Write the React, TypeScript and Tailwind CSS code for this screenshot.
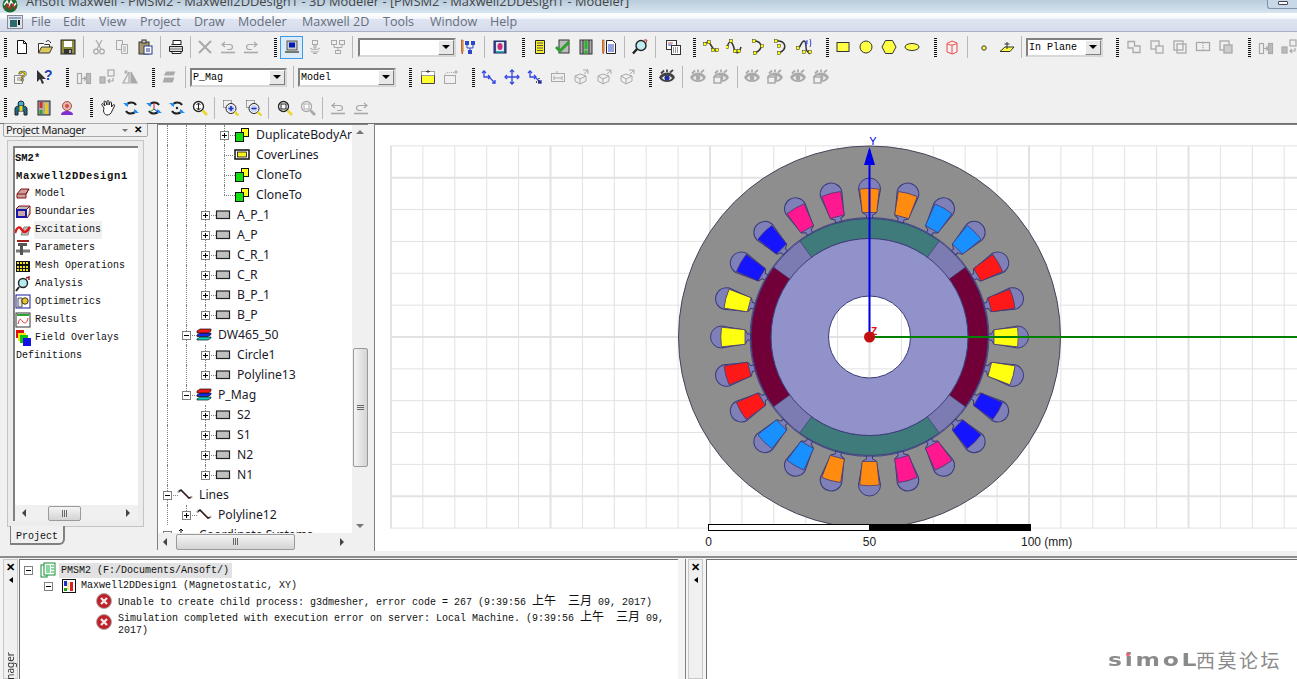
import React from "react";

const g = "#a9a9a9";
const k = "#222";
const Sv = ({ c, s = 16 }: { c: React.ReactNode; s?: number }) => (
  <svg width={s} height={s} viewBox="0 0 16 16" fill="none" className="shrink-0">{c}</svg>
);

const undo = (col: string) => (<g stroke={col} strokeWidth="1.2"><path d="M5 3 2 5.5 5 8" /><path d="M2.5 5.5h7c4 0 4 5 0 5H7" /><path d="M1 13.5h14" strokeWidth="1.6" /></g>);
const redo = (col: string) => (<g stroke={col} strokeWidth="1.2"><path d="M11 3l3 2.5L11 8" /><path d="M13.5 5.5h-7c-4 0-4 5 0 5H9" /><path d="M1 13.5h14" strokeWidth="1.6" /></g>);
const eye = (col: string, box = false) => (
  <g>
    <path d="M0 8.500C3 2.500 13 1.500 16 8.500 13 14.500 3 14.500 0 8.500z" fill={col} />
    <path d="M3 9C5 6 11 6 13 9 11 12 5 12 3 9z" fill="#f0f0f0" />
    <circle cx="8" cy="9" r="2.400" fill={col} />
    <path d="M2 4.500 5 1.500M8 3V.5M11 3.500 14 1" stroke={col} strokeWidth="1.800" />
    {box ? <path d="M1 8h7v6H1zM1 8l2-2h7l-2 2" fill="#f0f0f0" stroke={col} strokeWidth="1.500" /> : null}
  </g>
);
const rot = (mid: React.ReactNode) => (
  <g>
    <path d="M3 5.500C5 1.500 11 1.500 13 5M13 10.500C11 14.500 5 14.500 3 11" stroke={k} strokeWidth="2" />
    <path d="M0 3h5v4zM16 13h-5V9z" fill="#1890ff" />{mid}
  </g>
);
const mag = (inner: React.ReactNode, col = k, h = "#e8d830") => (
  <g>
    <circle cx="6.500" cy="6.500" r="5" fill="#fff" stroke={col} strokeWidth="1.300" />{inner}
    <path d="M10.500 10.500 15 15" stroke={h} strokeWidth="2.600" />
  </g>
);
const dashedMag = (sign: React.ReactNode) => (
  <g>
    <path d="M.5.5h8v6" stroke="#555" strokeDasharray="1 1" />
    <path d="M.5.5v7h3" stroke="#555" strokeDasharray="1 1" />
    <circle cx="8" cy="8.500" r="5" fill="#fff" stroke={k} />
    <circle cx="8" cy="8.500" r="3.600" fill="#c9d6f5" />{sign}
    <path d="M11.500 12 15.500 15.500" stroke="#e8d830" strokeWidth="2.400" />
  </g>
);
const curve = (d: string, pts: number[][]) => (
  <g>
    <path d={d} stroke="#333" strokeWidth="1.500" />
    {pts.map((p, i) => <rect key={i} x={p[0] - 1.5} y={p[1] - 1.5} width="3" height="3" fill="#ff0" stroke="#333" strokeWidth=".5" />)}
  </g>
);
const blueAxes = (v: number) => (
  <g stroke="#3044e0" strokeWidth="1.300">
    <path d={v === 1 ? "M8 1v14M1 8h14" : "M3 2v6h6M9 9l5 5"} />
    <path d={v === 1 ? "M6 3l2-2 2 2M6 13l2 2 2-2M3 6 1 8l2 2M13 6l2 2-2 2" : "M1 4l2-2 2 2M7 6l2 2-2 2M11 14h3v-3"} />
    {v === 2 ? <path d="M9 13h5M12 9v5" stroke="#222" strokeDasharray="1 1" /> : null}
  </g>
);
const grayBoxArrows = (
  <g stroke={g}><path d="M2 7 7 5l6 2v5l-6 3-5-3zM7 10v5M2 7l5 3 6-3" /><path d="M10 1h5M15 1v4M15 1l-4 4" /></g>
);

const icons: Record<string, React.ReactNode> = {
  new: <g stroke="#111"><path d="M3.500 1.500h6l3 3v10h-9z" fill="#fff" /><path d="M9.500 1.500v3h3" /></g>,
  open: <g stroke="#333"><path d="M1.500 14V4.500h5l1 1h5V8" fill="#fff" /><path d="M1.500 14l3-6h11l-3 6z" fill="#dcc85c" /><path d="M9 3c1-2 3-2 4 0l1 1" stroke="#222" /></g>,
  save: <g><rect x="1" y="1" width="14" height="14" fill="#8d8d3f" stroke="#222" /><rect x="4" y="2" width="8" height="6" fill="#fff" /><rect x="4" y="10" width="8" height="5" fill="#333" /><rect x="9" y="11" width="2" height="3" fill="#aaa" /></g>,
  cut: <g stroke={g} strokeWidth="1.200"><path d="M5 1l5 9M11 1 6 10" /><circle cx="5" cy="12.500" r="2.300" /><circle cx="11" cy="12.500" r="2.300" /></g>,
  copy: <g stroke={g}><path d="M2.500 1.500h6v9h-6z" /><path d="M7.500 5.500h6v9h-6z" fill="#f0f0f0" /><path d="M9 8h3M9 10h3M9 12h3" /></g>,
  paste: <g stroke="#333"><rect x="2" y="3" width="10" height="12" fill="#a89a68" /><rect x="5" y="1" width="4" height="3" fill="#ccc" /><rect x="7" y="7" width="8" height="8" fill="#fff" stroke="#223a90" /><path d="M9 10h4M9 12h4" stroke="#223a90" /></g>,
  print: <g stroke="#222"><path d="M5 1.500h8v4H5z" fill="#fff" /><path d="M1.500 7.500h13v5h-13z" fill="#ddd" /><path d="M3.500 5.500h10" /><path d="M4 12.500h9v2H4z" fill="#fff" /><path d="M2 10h12" stroke="#777" /></g>,
  del: <path d="M2 2l12 12M14 2 2 14" stroke={g} strokeWidth="2" />,
  undo: undo(g),
  redo: redo(g),
  comp: <g><rect x="3" y="2" width="10" height="9" fill="#ccc" stroke="#555" /><rect x="5" y="3.500" width="6" height="5" fill="#0018b8" /><path d="M1 13h14" stroke="#777" strokeWidth="2" /><path d="M3 13h2" stroke="#2ea02e" /></g>,
  wifi: <g stroke={g}><rect x="5.500" y="1.500" width="5" height="4" /><path d="M7 6h2v3H7zM3 9c2 2 8 2 10 0M4 12c2 1.500 6 1.500 8 0M6 14.500h4" /></g>,
  net: <g stroke={g}><rect x="1.500" y="1.500" width="5" height="4" /><rect x="9.500" y="1.500" width="5" height="4" /><rect x="5.500" y="11.500" width="5" height="3" /><path d="M4 6v2.500h8V6M8 8.500v3" /></g>,
  tree: <g><path d="M1.500 1l1.500 0v11l-.75 3L1.500 12z" fill="#e8c830" stroke="#b03020" strokeWidth=".7" /><g fill="#2c48c8"><rect x="5" y="2" width="4" height="4" /><rect x="11" y="2" width="4" height="4" /><rect x="8" y="11" width="4" height="4" /></g><path d="M7 6v3h6V6M10 9v2" stroke="#2c48c8" /></g>,
  q: <g><rect x="2" y="2" width="12" height="12" fill="#3a4a90" stroke="#1c2460" /><rect x="4" y="3" width="8" height="10" fill="#d8e8f0" /><ellipse cx="8" cy="7.500" rx="2.500" ry="3.500" fill="#d02878" /><path d="M4 13h8" stroke="#2090a0" strokeWidth="1.500" /></g>,
  ydoc: <g stroke="#222"><path d="M3.500 1.500h9v13h-9z" fill="#f8f030" /><path d="M5 4h6M5 6.500h6M5 9h6M5 11.500h6" stroke="#555" /></g>,
  check: <g><rect x="4" y="1" width="10" height="13" fill="#bbb" stroke="#333" /><path d="M1 8l4 4 9-9" stroke="#2d9f2d" strokeWidth="3" /></g>,
  excl: <g><rect x="2" y="1" width="12" height="14" fill="#aaa" stroke="#333" /><path d="M5 1v14M11 1v14" stroke="#333" /><rect x="6.500" y="2" width="3" height="8" fill="#22bb22" /><rect x="6.500" y="11.500" width="3" height="3" fill="#22bb22" /></g>,
  list: <g><path d="M1.500 1l1.500 0v11l-.75 3L1.500 12z" fill="#e8c830" stroke="#b03020" strokeWidth=".7" /><path d="M5.500 1.500h6l3 3v10h-9z" fill="#fff" stroke="#222" /><path d="M7 6h6M7 8h6M7 10h6M7 12h6" stroke="#2c48c8" /></g>,
  search: <g><circle cx="9" cy="6.500" r="5" fill="#bfeef2" stroke="#222" strokeWidth="1.400" /><path d="M5 10 1 14.500" stroke="#222" strokeWidth="2.400" /><path d="M12 1l3 0-1 3" stroke="#c03030" /></g>,
  table: <g stroke="#333"><rect x="1.500" y="1.500" width="10" height="9" fill="#fff" /><path d="M3 4h5" stroke="#c05050" /><path d="M3 6h4" stroke="#3050c0" /><rect x="6.500" y="6.500" width="9" height="9" fill="#fff" /><path d="M8 9h6M8 11h6M8 13h6" strokeDasharray="1 1" /></g>,
  polyline: curve("M2 4 6 3l5 8 3 1", [[2, 5], [6, 3], [10, 11], [14, 11]]),
  spline: curve("M1 9C3 0 6 2 8 9s5 6 7-1", [[1, 8], [5, 2], [9, 12], [13, 12]]),
  arc: curve("M4 2c8 0 10 8 1 12", [[4, 2], [12, 7], [5, 14]]),
  arc2: curve("M3 2c10-1 12 8 3 12", [[3, 2], [6, 7], [6, 14]]),
  func: <g>{curve("M1 10C5 9 5 2 8 2s1 8 3 10l3 3", [[2, 9], [8, 13], [14, 13]])}<path d="M10 7V2h2M10 4h2M14 0c1 2 1 6 0 8" stroke="#3044e0" /></g>,
  rect: <rect x="2" y="3.500" width="12" height="9" fill="#ffff44" stroke="#333" />,
  circle: <circle cx="8" cy="8" r="6" fill="#ffff44" stroke="#333" />,
  hex: <path d="M4.500 1.500h7L15 8l-3.500 6.500h-7L1 8z" fill="#ffff44" stroke="#333" />,
  ell: <ellipse cx="8" cy="8" rx="7" ry="3.500" fill="#ffff44" stroke="#333" />,
  cyl: <g stroke="#f04848"><path d="M3 4.500 8 2l5 2v9l-4.500 2L3 13z" /><path d="M3 4.500c2 2 6 2 10 0M8 6v9" /></g>,
  dot: <circle cx="8" cy="9" r="2.200" fill="#ffff44" stroke="#333" />,
  plane: <g stroke="#333"><path d="M1 12.500 6 8h9l-4 4.500z" fill="#ffff44" /><path d="M8 10V3M5.500 5h5" /></g>,
  g1: <path d="M2 2.500h6.500V7H14v6.500H7V9H2z" stroke={g} strokeWidth="1.300" />,
  g2: <g stroke={g} strokeWidth="1.300"><rect x="2" y="2" width="8" height="8" /><rect x="7" y="7" width="7" height="7" fill="#f0f0f0" /></g>,
  g3: <g stroke={g} strokeWidth="1.300"><rect x="2" y="2" width="9" height="9" /><rect x="5" y="5" width="9" height="9" /></g>,
  g4: <g stroke={g} strokeWidth="1.300"><rect x="1.500" y="3.500" width="13" height="8" /><path d="M8 4v7" strokeDasharray="1 1" /></g>,
  g5: <g stroke={g} strokeWidth="1.300"><rect x="2" y="2" width="9" height="9" /><rect x="6" y="6" width="8" height="8" fill="#ccc" /></g>,
  m1: <g stroke={g} strokeWidth="1.200"><rect x="1.500" y="4.500" width="4" height="10" /><rect x="10.500" y="4.500" width="4" height="10" fill="#bbb" /><path d="M6 9.500h4M8 7.500l2 2-2 2" /></g>,
  m2: <g stroke={g} strokeWidth="1.200"><rect x="1" y="8" width="5" height="6" fill="#bbb" /><rect x="9" y="1" width="6" height="6" /><path d="M14 9v3H9M11 10l-2 2 2 2" /></g>,
  m3: <g stroke={g} strokeWidth="1.200"><path d="M7 3v11H1zM2 3h4M4 1v4" /><path d="M9 3l6 11H9z" fill={g} /></g>,
  help: <g><path d="M1.500 6.500h8v8h-8z" fill="#f4f4f4" stroke="#888" /><path d="M4 9h4M4 11h4" stroke="#888" /><text x="5" y="12" fontFamily="Liberation Sans" fontWeight="700" fontSize="15" fill="#e8d020" stroke="#333" strokeWidth=".5">?</text></g>,
  whats: <g><path d="M1 1v12l3-3 2 5 2-1-2-4h4z" fill="#333" /><text x="8" y="11" fontFamily="Liberation Sans" fontWeight="700" fontSize="14" fill="#2040b0">?</text></g>,
  layers: <path d="M5 2h10l-2 5H2zM3 8h11l-2 6H1z" fill={g} stroke="#f0f0f0" />,
  ybox: <g stroke="#444"><path d="M1.500 6.500h13v8h-13z" fill="#ffff30" /><path d="M1.500 6.500v-4h13v4" fill="#fff" strokeDasharray="1 1" /><path d="M8 1v3M6 2.500h4" /></g>,
  gbox: <g stroke={g}><rect x="1.500" y="6.500" width="11" height="8" /><path d="M1.500 6.500l2-3h9" strokeDasharray="1 1" /><path d="M13 1v4M11 3h4" /></g>,
  ax1: blueAxes(0),
  ax2: blueAxes(1),
  ax3: blueAxes(2),
  b1: <g stroke={g}><rect x="1.500" y="4.500" width="13" height="8" /><path d="M4 9h8M4 7v4M12 7v4M7 2v3" /></g>,
  b2: grayBoxArrows,
  eye: <g>{eye("#444")}<circle cx="8" cy="9" r="2.500" fill="#2030a0" /></g>,
  ey1: eye("#aaa"),
  ey2: eye("#aaa", true),
  wiz: <g><circle cx="8" cy="4" r="3" fill="#40b0d0" stroke="#222" /><path d="M2 15V9c0-3 3-3 6-3s6 0 6 3v6h-3v-4H5v4z" fill="#1c6a88" stroke="#222" /><rect x="6.500" y="6" width="3" height="5" fill="#e8d820" /></g>,
  bars: <g><rect x="2" y="1" width="12" height="14" fill="#aaa" stroke="#222" /><rect x="3.500" y="2" width="3" height="6" fill="#d03030" /><rect x="3.500" y="10" width="3" height="4" fill="#30a030" /><rect x="9" y="3" width="3" height="11" fill="#e8c820" /></g>,
  tgt: <g><circle cx="8" cy="6" r="4.500" fill="#e8b8a8" stroke="#a05050" /><circle cx="8" cy="6" r="2" fill="#d05050" /><path d="M2 15c0-3 3-4 6-4s6 1 6 4z" fill="#8030d0" /></g>,
  hand: <g stroke="#222" fill="#fff"><path d="M4 8 2 5c-1-1 .5-2 1.500-1L5 6 4 2c0-1.500 1.500-1 2 0l1 3V1.500c0-1.500 2-1 2 0V5l1-2.500c.5-1 2-.5 1.500.5L11.500 7l1.500-2c1-1 2 0 1.500 1l-2.500 5c-1 3-3 4-5 4S4 13 3.500 11z" /></g>,
  r1: rot(null),
  r2: rot(<g><path d="M8 3v6" stroke="#d02020" /><path d="M8 9l-4 3" stroke="#20a020" /><path d="M8 9l4 3" stroke="#2030d0" /></g>),
  r3: rot(<circle cx="8" cy="8" r="1.200" fill="#222" />),
  zfit: mag(<path d="M6.500 3v7M4.500 5l2-2 2 2M4.500 8l2 2 2-2" stroke="#222" />),
  zin: dashedMag(<path d="M5.500 8.500h5M8 6v5" stroke="#2030c0" strokeWidth="1.600" />),
  zout: dashedMag(<path d="M5.500 8.500h5" stroke="#2030c0" strokeWidth="1.600" />),
  z1: mag(<rect x="4" y="4" width="5" height="5" stroke={k} />),
  z2: mag(<rect x="4" y="4" width="5" height="5" stroke={g} />, g, g),
};

const I = ({ n, className = "" }: { n: string; className?: string }) => (
  <div className={`flex h-[23px] w-[23px] shrink-0 items-center justify-center ${className}`}>
    <Sv c={icons[n]} />
  </div>
);
const Grip = ({ className = "" }: { className?: string }) => (
  <div className={`h-[19px] w-[3px] shrink-0 bg-[repeating-linear-gradient(#111_0_1px,transparent_1px_2px)] ${className}`} />
);
const Sep = ({ className = "" }: { className?: string }) => (
  <div className={`h-[22px] w-px shrink-0 bg-[#b8b8b8] ${className}`} />
);
const Combo = ({ text, className = "" }: { text: string; className?: string }) => (
  <div className={`flex h-[19px] shrink-0 border-2 border-b-[#d8d8d8] border-l-[#808080] border-r-[#d8d8d8] border-t-[#808080] bg-white ${className}`}>
    <span className="flex-1 overflow-hidden pl-[1px] font-['Liberation_Mono',monospace] text-[10px] leading-[15px] text-black">{text}</span>
    <div className="flex w-[16px] shrink-0 items-center justify-center border border-b-[#808080] border-l-white border-r-[#808080] border-t-white bg-[#e8e8e8]">
      <div className="h-0 w-0 border-x-[4px] border-t-[4px] border-x-transparent border-t-black" />
    </div>
  </div>
);
const Row = ({ h, children }: { h: string; children: React.ReactNode }) => (
  <div className={`flex items-center overflow-hidden pl-[4px] ${h}`}>{children}</div>
);

const Box = ({ t }: { t: "+" | "-" }) => (
  <div className="flex h-[9px] w-[9px] items-center justify-center border border-[#808080] bg-white">
    <div className="relative h-[5px] w-[5px]">
      <div className="absolute left-0 top-[2px] h-px w-[5px] bg-black" />
      {t === "+" ? <div className="absolute left-[2px] top-0 h-[5px] w-px bg-black" /> : null}
    </div>
  </div>
);

const treeIcons: Record<string, React.ReactNode> = {
  dup: <g stroke="#111"><rect x="7.500" y="1.500" width="7" height="8" fill="#ffff20" /><rect x="1.500" y="5.500" width="8" height="9" fill="#10e010" /></g>,
  cov: <g stroke="#111"><rect x="1" y="3" width="14" height="9" fill="#fff" strokeWidth="1.500" /><rect x="3.500" y="5" width="9" height="5" fill="#f8f020" strokeWidth=".8" /></g>,
  gray: <rect x="1.500" y="4" width="13" height="7.500" fill="#c0c0c0" stroke="#222" strokeWidth="1.200" />,
  mat: <g stroke="#111" strokeWidth=".7"><path d="M1 13h11l3-2v-1H4l-3 2z" fill="#10d0c0" /><path d="M1 9.500h11l3-2V6H4L1 8z" fill="#1828e0" /><path d="M1 6h11l3-2V2H4L1 4z" fill="#f01818" /></g>,
  line: <g><path d="M1 5l3-2 8 8 3-1" stroke="#222" strokeWidth="1.600" /><path d="M4 4l8 8" stroke="#a04040" strokeWidth=".8" /><circle cx="1.500" cy="5" r="1" fill="#aaa" /><circle cx="14.500" cy="10" r="1" fill="#aaa" /></g>,
  coord: <path d="M4 16V2M2 4l2-2 2 2" stroke="#111" />,
};

type TR = { d: number; gs: number[]; end?: boolean; cont?: boolean; box?: "+" | "-"; ic: string; t: string };
const treeRows: TR[] = [
  { d: 3, gs: [0, 1, 2], cont: true, box: "+", ic: "dup", t: "DuplicateBodyAr" },
  { d: 3, gs: [0, 1, 2], cont: true, ic: "cov", t: "CoverLines" },
  { d: 3, gs: [0, 1, 2], cont: true, ic: "dup", t: "CloneTo" },
  { d: 3, gs: [0, 1, 2], end: true, ic: "dup", t: "CloneTo" },
  { d: 2, gs: [0, 1], cont: true, box: "+", ic: "gray", t: "A_P_1" },
  { d: 2, gs: [0, 1], cont: true, box: "+", ic: "gray", t: "A_P" },
  { d: 2, gs: [0, 1], cont: true, box: "+", ic: "gray", t: "C_R_1" },
  { d: 2, gs: [0, 1], cont: true, box: "+", ic: "gray", t: "C_R" },
  { d: 2, gs: [0, 1], cont: true, box: "+", ic: "gray", t: "B_P_1" },
  { d: 2, gs: [0, 1], end: true, box: "+", ic: "gray", t: "B_P" },
  { d: 1, gs: [0], cont: true, box: "-", ic: "mat", t: "DW465_50" },
  { d: 2, gs: [0, 1], cont: true, box: "+", ic: "gray", t: "Circle1" },
  { d: 2, gs: [0, 1], end: true, box: "+", ic: "gray", t: "Polyline13" },
  { d: 1, gs: [0], end: true, box: "-", ic: "mat", t: "P_Mag" },
  { d: 2, gs: [0], cont: true, box: "+", ic: "gray", t: "S2" },
  { d: 2, gs: [0], cont: true, box: "+", ic: "gray", t: "S1" },
  { d: 2, gs: [0], cont: true, box: "+", ic: "gray", t: "N2" },
  { d: 2, gs: [0], end: true, box: "+", ic: "gray", t: "N1" },
  { d: 0, gs: [], cont: true, box: "-", ic: "line", t: "Lines" },
  { d: 1, gs: [0], end: true, box: "+", ic: "line", t: "Polyline12" },
  { d: 0, gs: [], box: "-", ic: "coord", t: "Coordinate Systems" },
];

const TreeRow = ({ r }: { r: TR }) => (
  <div className="flex h-[20px] shrink-0 items-center">
    {[0, 1, 2, 3].slice(0, r.d).map((i) => (
      <div key={i} className="flex h-full w-[19px] shrink-0 justify-center">
        {r.gs.includes(i) ? <div className="h-full w-0 border-l border-dotted border-[#808080]" /> : null}
      </div>
    ))}
    <div className="relative flex h-full w-[19px] shrink-0 items-center justify-center">
      {r.cont ? <div className="absolute bottom-0 left-[9px] top-0 border-l border-dotted border-[#808080]" /> : null}
      {r.end ? <div className="absolute left-[9px] top-0 h-[10px] border-l border-dotted border-[#808080]" /> : null}
      <div className="absolute left-[9px] top-[10px] w-[11px] border-t border-dotted border-[#808080]" />
      {r.box ? <div className="relative"><Box t={r.box} /></div> : null}
    </div>
    <Sv c={treeIcons[r.ic]} />
    <span className="ml-[6px] whitespace-nowrap font-['Noto_Sans',sans-serif] text-[12.200px] leading-[20px] text-[#1a1a2a]">{r.t}</span>
  </div>
);

const pmIcons: Record<string, React.ReactNode> = {
  model: <g stroke="#8a1010"><path d="M2 8l4-5h8l-3 5v4H2z" fill="#c8a0a0" /><path d="M2 8h9l3-5" /></g>,
  bound: <g><path d="M1 5h11v9H1z" fill="#1818a8" /><path d="M3 7h7v5H3z" fill="#c8a8a8" /><path d="M1 5l3-3h11l-3 3M12 14l3-4V2" stroke="#8a1010" fill="#bbb" /></g>,
  exc: <g><path d="M6 13l3-8h6l-2 8z" fill="#bbb" stroke="#888" /><path d="M0 11c3-8 5-6 7-3s4 3 8-3" stroke="#e01818" strokeWidth="2.500" /></g>,
  param: <g><path d="M1 11h14" stroke="#777" strokeWidth="3" /><path d="M3 3h9v3H8v9H5V6H3z" fill="#555" /><path d="M2 1h12" stroke="#a02020" strokeWidth="2" /></g>,
  mesh: <g><rect x="1" y="3" width="14" height="11" fill="#111" /><g fill="#f0e020">{[4, 8, 11].map((y) => [2, 5, 8, 11].map((x) => <rect key={`${x}-${y}`} x={x} y={y} width="2" height="2" />))}</g></g>,
  ana: <g><circle cx="8" cy="7" r="4.500" fill="#b8e8f0" stroke="#222" strokeWidth="1.400" /><path d="M4 11 1 15" stroke="#222" strokeWidth="2" /><path d="M11 2l3-1v3" stroke="#902020" strokeWidth="1.500" /></g>,
  opt: <g><rect x="1" y="1" width="14" height="13" fill="#fff" stroke="#1818a8" /><path d="M3 4h4v9H3z" fill="#e8e8e8" stroke="#555" /><circle cx="10" cy="7" r="3.200" fill="#e8c820" stroke="#333" /></g>,
  res: <g><rect x="1" y="1" width="14" height="14" fill="#fff" stroke="#333" /><path d="M2 2h12v2H2z" fill="#30a030" /><path d="M3 12c2-8 3-4 5-2s4 1 5-4" stroke="#e03030" /></g>,
  field: <g><rect x="1" y="0" width="8" height="8" fill="#e01010" /><rect x="3" y="3" width="8" height="8" fill="#e8e810" /><rect x="5" y="5" width="8" height="8" fill="#10c010" /><rect x="8" y="8" width="8" height="8" fill="#1010e8" /></g>,
};
const pmRows = [
  ["model", "Model"], ["bound", "Boundaries"], ["exc", "Excitations"], ["param", "Parameters"], ["mesh", "Mesh Operations"],
  ["ana", "Analysis"], ["opt", "Optimetrics"], ["res", "Results"], ["field", "Field Overlays"],
];

const Arrow = ({ d }: { d: "l" | "r" | "u" | "d" }) => {
  const c = d === "l" ? "border-y-[4px] border-r-[4px] border-y-transparent border-r-[#444]"
    : d === "r" ? "border-y-[4px] border-l-[4px] border-y-transparent border-l-[#444]"
    : d === "u" ? "border-x-[4px] border-b-[4px] border-x-transparent border-b-[#777]"
    : "border-x-[4px] border-t-[4px] border-x-transparent border-t-[#777]";
  return <div className={`h-0 w-0 shrink-0 ${c}`} />;
};
const Ticks = ({ v }: { v?: boolean }) => (
  <div className={`flex ${v ? "flex-col gap-px" : "gap-px"}`}>
    {[0, 1, 2].map((i) => <div key={i} className={v ? "h-px w-[7px] bg-[#666]" : "h-[7px] w-px bg-[#666]"} />)}
  </div>
);

const CX = 869.5;
const CY = 337;
const pol = (r: number, deg: number) => {
  const a = (deg * Math.PI) / 180;
  return [CX + r * Math.cos(a), CY - r * Math.sin(a)].map((v) => v.toFixed(2)).join(" ");
};
const sector = (r1: number, r2: number, a1: number, a2: number) =>
  `M${pol(r2, a1)} A${r2} ${r2} 0 0 0 ${pol(r2, a2)} L${pol(r1, a2)} A${r1} ${r1} 0 0 1 ${pol(r1, a1)} Z`;
const slotColors = ["#ffff10", "#ff1818", "#ff1818", "#1890ff", "#1890ff", "#ff8c10", "#ff8c10", "#ff1890", "#ff1890", "#1414ff", "#1414ff", "#ffff10"];

const Motor = () => {
  const vs = Array.from({ length: 29 }, (_, i) => i - 15);
  const hs = Array.from({ length: 13 }, (_, i) => i - 6);
  return (
    <svg className="block h-full w-full" viewBox="375 125 922 426" preserveAspectRatio="xMinYMin slice">
      <defs>
        <mask id="hole" maskUnits="userSpaceOnUse" x="375" y="125" width="922" height="426">
          <rect x="375" y="125" width="922" height="426" fill="#fff" />
          <circle cx={CX} cy={CY} r="41" fill="#000" />
        </mask>
      </defs>
      {vs.map((i) => (
        <line key={i} x1={CX + i * 31.9} x2={CX + i * 31.9} y1="146" y2="528" stroke="#e2e2e2" strokeWidth={i % 5 === 0 ? 2 : 1} />
      ))}
      {hs.map((i) => (
        <line key={i} x1="390" x2="1297" y1={CY + i * 31.85} y2={CY + i * 31.85} stroke="#e2e2e2" strokeWidth={Math.abs(i) === 5 || i === 0 ? 2 : 1} />
      ))}
      <g mask="url(#hole)">
        <circle cx={CX} cy={CY} r="191" fill="#8e8e8e" stroke="#44445a" />
        <circle cx={CX} cy={CY} r="119.500" fill="#8080b8" stroke="#3b3b7a" strokeWidth=".8" />
        {Array.from({ length: 24 }, (_, i) => {
          const a = i * 15;
          return (
            <g key={a} transform={`rotate(${90 - a} ${CX} ${CY}) translate(${CX} ${CY})`}>
              <path d="M-3 -119L-3 -122L-6.800 -124L-11 -148A11 11 0 0 1 11 -148L6.800 -124L3 -122L3 -119Z" fill="#8080b8" stroke="#3b3b7a" />
              <path d="M-7.300 -124.500L-9.800 -148Q0 -149.500 9.800 -148L7.300 -124.500Z" fill={slotColors[i % 12]} stroke="#4a3a70" strokeWidth=".8" />
            </g>
          );
        })}
        <circle cx={CX} cy={CY} r="118.500" fill="#7c7cb2" stroke="#3b3b7a" strokeWidth=".8" />
        <path d={sector(98.500, 118.500, -36, 36)} fill="#720038" stroke="#3b3b7a" strokeWidth=".7" />
        <path d={sector(98.500, 118.500, 144, 216)} fill="#720038" stroke="#3b3b7a" strokeWidth=".7" />
        <path d={sector(98.500, 118.500, 54, 126)} fill="#3f7b7b" stroke="#3b3b7a" strokeWidth=".7" />
        <path d={sector(98.500, 118.500, 234, 306)} fill="#3f7b7b" stroke="#3b3b7a" strokeWidth=".7" />
        <circle cx={CX} cy={CY} r="98.500" fill="#9292ca" stroke="#3b3b7a" />
      </g>
      <circle cx={CX} cy={CY} r="41" fill="none" stroke="#3b3b7a" />
      <line x1={CX} x2="1297" y1={CY} y2={CY} stroke="#008000" strokeWidth="2" />
      <line x1={CX} x2={CX} y1="150" y2={CY} stroke="#0000e8" strokeWidth="2" />
      <path d={`M${CX} 147 L${CX + 5.5} 165 L${CX - 5.500} 165 Z`} fill="#0000e8" />
      <text x="873" y="145" textAnchor="middle" fontFamily="Liberation Sans" fontSize="11" fill="#0000e8">Y</text>
      <text x="871" y="335" fontFamily="Liberation Sans" fontWeight="700" fontSize="10" fill="#e01010">Z</text>
      <circle cx={CX} cy={CY} r="5.500" fill="#c01010" />
      <rect x="708.500" y="524.500" width="161" height="6" fill="#fff" stroke="#000" />
      <rect x="869" y="524" width="162" height="7" fill="#000" />
      <g fontFamily="Liberation Sans" fontSize="12" fill="#222">
        <text x="708.500" y="546" textAnchor="middle">0</text>
        <text x="869.500" y="546" textAnchor="middle">50</text>
        <text x="1021" y="546">100 (mm)</text>
      </g>
    </svg>
  );
};

const Err = () => (
  <svg width="16" height="16" viewBox="0 0 16 16" className="shrink-0">
    <circle cx="8" cy="8" r="7.500" fill="#c02028" stroke="#aaa" />
    <path d="M5 5l6 6M11 5l-6 6" stroke="#f0e8e8" strokeWidth="2.400" />
  </svg>
);

const mono = "font-['Liberation_Mono','Noto_Sans_CJK_SC',monospace] text-[10px] text-[#111]";

const SideStrip = ({ label, className = "" }: { label?: string; className?: string }) => (
  <div className={`flex shrink-0 flex-col items-center border border-[#c8c8c8] bg-[#f0f0f0] pt-[1px] ${className}`}>
    <span className="font-['Liberation_Sans',sans-serif] text-[11px] font-bold leading-[12px] text-black">✕</span>
    <div className="mt-[4px] h-0 w-0 border-y-[3px] border-r-[4px] border-y-transparent border-r-black" />
    {label ? (
      <span className="mb-[-2px] mt-auto rotate-180 font-['Noto_Sans',sans-serif] text-[10px] leading-[13px] text-[#333] [writing-mode:vertical-rl]">{label}</span>
    ) : null}
  </div>
);

const menus: [string, string][] = [
  ["File", "w-[32px]"], ["Edit", "w-[36px]"], ["View", "w-[41px]"], ["Project", "w-[54px]"], ["Draw", "w-[44px]"],
  ["Modeler", "w-[64px]"], ["Maxwell 2D", "w-[81px]"], ["Tools", "w-[47px]"], ["Window", "w-[60px]"], ["Help", "w-[40px]"],
];

export default function App() {
  return (
    <div className="relative flex h-[679px] w-[1297px] flex-col overflow-hidden bg-[#f0f0f0]">
      {/* title bar */}
      <div className="flex h-[13px] shrink-0 items-start bg-gradient-to-b from-[#b9ccdc] to-[#d8e5f1]">
        <svg width="16" height="13" viewBox="0 0 16 13" className="ml-[2px] shrink-0">
          <circle cx="8" cy="5" r="7.500" fill="#1d6a30" />
          <path d="M2 5 5 1l2 5 2-5 3 5 2-3" stroke="#fff" strokeWidth="1.400" fill="none" />
          <path d="M3 9 6 4l2 5 3-5 2 5" stroke="#d02020" strokeWidth="1.200" fill="none" />
        </svg>
        <span className="ml-[8px] mt-[-8px] whitespace-nowrap font-['Open_Sans',sans-serif] text-[12.870px] leading-[18px] text-[#444]">
          Ansoft Maxwell - PMSM2 - Maxwell2DDesign1 - 3D Modeler - [PMSM2 - Maxwell2DDesign1 - Modeler]
        </span>
        <div className="ml-auto flex h-[9px] w-[30px] items-start justify-center rounded-bl-[3px] border-b border-l border-[#7f94a8] bg-[#c8d8e6]">
          <div className="mt-px h-[4px] w-[10px] rounded-[1px] border border-[#445] bg-white" />
        </div>
      </div>
      {/* menu bar */}
      <div className="flex h-[19px] shrink-0 items-center border-b border-[#a8b2c6] bg-[linear-gradient(#fff_0,#f4f6fb_30%,#dfe4f2_36%,#d6dcec_100%)]">
        <svg width="16" height="14" viewBox="0 0 16 14" className="ml-[7px] mr-[8px] shrink-0">
          <rect x=".5" y=".5" width="15" height="13" fill="#dfe4ea" stroke="#889" />
          <rect x="2" y="2" width="12" height="2" fill="#8ca6c0" />
          <rect x="3" y="5" width="7" height="7" fill="#2c6a70" />
          <rect x="11" y="5" width="2" height="5" fill="#111" />
        </svg>
        {menus.map(([m, w]) => (
          <span key={m} className={`${w} shrink-0 whitespace-nowrap font-['Open_Sans',sans-serif] text-[12.500px] leading-[18px] text-[#66707c]`}>{m}</span>
        ))}
      </div>
      {/* toolbars */}
      <div className="flex h-[91px] shrink-0 flex-col">
        <Row h="h-[30px]">
          <Grip /><I n="new" className="ml-[3px]" /><I n="open" /><I n="save" /><Sep className="ml-[4px]" />
          <I n="cut" className="ml-[3px]" /><I n="copy" /><I n="paste" /><Sep className="ml-[4px]" />
          <I n="print" className="ml-[3px]" /><Sep className="ml-[3px]" />
          <I n="del" className="ml-[2px]" /><I n="undo" /><I n="redo" />
          <Grip className="ml-[12px]" />
          <I n="comp" className="ml-[3px] border border-[#3c9ae8] bg-[#dcebf8]" /><I n="wifi" /><I n="net" /><Sep className="ml-[3px]" />
          <Combo text="" className="ml-[5px] w-[98px]" /><I n="tree" /><Sep className="ml-[5px]" />
          <I n="q" className="ml-[3px]" /><Grip className="ml-[11px]" />
          <I n="ydoc" className="ml-[3px]" /><I n="check" /><I n="excl" /><I n="list" /><Sep className="ml-[4px]" />
          <I n="search" className="ml-[3px]" /><Sep className="ml-[4px]" /><I n="table" className="ml-[5px]" />
          <Grip className="ml-[9px]" />
          <I n="polyline" className="ml-[3px]" /><I n="spline" /><I n="arc" className="ml-px" /><I n="arc2" /><I n="func" />
          <Grip className="ml-[11px]" />
          <I n="rect" className="ml-[2px]" /><I n="circle" /><I n="hex" /><I n="ell" />
          <Grip className="ml-[11px]" /><I n="cyl" className="ml-[3px]" /><Sep className="ml-[4px]" />
          <I n="dot" className="ml-[4px]" /><I n="plane" /><Sep className="ml-[3px]" />
          <Combo text="In Plane" className="ml-[4px] w-[77px]" />
          <Grip className="ml-[13px]" />
          <I n="g1" className="ml-[3px]" /><I n="g2" /><I n="g3" /><I n="g4" /><I n="g5" />
          <Grip className="ml-[11px]" /><I n="m1" className="ml-[3px]" /><I n="m2" />
        </Row>
        <Row h="h-[30px]">
          <Grip /><I n="help" className="ml-[2px]" /><I n="whats" /><Grip className="ml-[11px]" />
          <I n="m1" className="ml-[3px]" /><I n="m2" /><I n="m3" /><Grip className="ml-[11px]" />
          <I n="layers" className="ml-[2px]" /><Sep className="ml-[5px]" />
          <Combo text="P_Mag" className="ml-[4px] w-[97px]" /><Sep className="ml-[6px]" />
          <Combo text="Model" className="ml-[4px] w-[98px]" /><Grip className="ml-[13px]" />
          <I n="ybox" className="ml-[4px]" /><I n="gbox" /><Grip className="ml-[10px]" />
          <I n="ax1" className="ml-[2px]" /><I n="ax2" /><I n="ax3" /><I n="b1" /><I n="b2" /><I n="b2" /><I n="b2" />
          <Grip className="ml-[11px]" /><I n="eye" className="ml-[3px]" /><Sep className="ml-[4px]" />
          <I n="ey1" className="ml-[3px]" /><I n="ey2" /><Sep className="ml-[5px]" />
          <I n="ey1" className="ml-[2px]" /><I n="ey2" /><I n="ey1" /><I n="ey2" />
        </Row>
        <Row h="h-[31px]">
          <Grip /><I n="wiz" className="ml-[2px]" /><I n="bars" /><I n="tgt" /><Grip className="ml-[12px]" />
          <I n="hand" className="ml-[3px]" /><I n="r1" /><I n="r2" /><I n="r3" /><I n="zfit" /><Sep className="ml-[3px]" />
          <I n="zin" className="ml-[4px]" /><I n="zout" /><Sep className="ml-[3px]" />
          <I n="z1" className="ml-[4px]" /><I n="z2" /><Sep className="ml-[3px]" />
          <I n="undo" className="ml-[3px]" /><I n="redo" />
        </Row>
      </div>
      <div className="h-px shrink-0 bg-[#707070]" />
      {/* main */}
      <div className="flex h-[432px] shrink-0">
        {/* project manager */}
        <div className="flex w-[157px] shrink-0 flex-col">
          <div className="ml-[3px] mt-[-1px] flex h-[14px] w-[145px] shrink-0 items-center rounded-[2px] border border-[#a8a8a8] pl-[2px] pr-[5px]">
            <span className="font-['Noto_Sans',sans-serif] text-[11px] leading-[12px] tracking-[-0.4px] text-[#222]">Project Manager</span>
            <div className="ml-auto h-0 w-0 border-x-[3px] border-t-[3px] border-x-transparent border-t-[#777]" />
            <span className="ml-[6px] font-['Liberation_Sans',sans-serif] text-[10px] font-bold leading-[12px] text-black">✕</span>
          </div>
          <div className="ml-[8px] mt-[4px] flex h-[385px] w-[135px] flex-col border-[5px] border-[#ececec] bg-white shadow-[0_0_0_1px_#c4c4c4]">
            <div className="flex min-h-0 flex-1 flex-col border-l-2 border-t-2 border-[#808080]">
              <div className="flex-1 overflow-hidden bg-white">
                <div className="mt-[1px] h-[18px] font-['Liberation_Mono',monospace] text-[10.500px] font-bold leading-[18px] text-[#111]">SM2*</div>
                <div className="h-[18px] pl-[1px] font-['Liberation_Mono',monospace] text-[10.500px] font-bold leading-[18px] tracking-[.7px] text-[#111]">Maxwell2DDesign1</div>
                {pmRows.map(([ic, t]) => (
                  <div key={t} className="flex h-[18px] items-center">
                    <Sv c={pmIcons[ic]} />
                    <span className={`ml-[3px] whitespace-nowrap px-px ${t === "Excitations" ? "bg-[#f0f0f0]" : ""} ${mono} leading-[18px]`}>{t}</span>
                  </div>
                ))}
                <div className={`h-[18px] pl-[1px] ${mono} leading-[18px]`}>Definitions</div>
              </div>
              <div className="flex h-[16px] shrink-0 items-center bg-[#f0f0f0] pl-[7px] pr-[8px]">
                <Arrow d="l" />
                <div className="ml-[22px] flex h-[15px] w-[33px] items-center justify-center rounded-[2px] border border-[#9a9a9a] bg-gradient-to-b from-[#f4f4f4] to-[#d4d4d4]"><Ticks /></div>
                <div className="ml-auto"><Arrow d="r" /></div>
              </div>
            </div>
          </div>
          <div className="ml-[10px] flex h-[19px] w-[55px] items-center rounded-br-[6px] border-b-2 border-l border-r-2 border-[#808080] bg-[#f0f0f0] pl-[5px] pt-[4px]">
            <span className={`${mono} leading-[14px]`}>Project</span>
          </div>
        </div>
        {/* tree */}
        <div className="flex h-[426px] w-[211px] shrink-0 flex-col border-l border-t border-[#808080] bg-white">
          <div className="flex min-h-0 flex-1">
            <div className="flex min-w-0 flex-1 flex-col overflow-hidden">
              {treeRows.map((r, i) => <TreeRow key={i} r={r} />)}
            </div>
            <div className="flex w-[16px] shrink-0 flex-col items-center bg-[#f0f0f0] py-[5px]">
              <Arrow d="u" />
              <div className="mt-[214px] flex h-[119px] w-[15px] items-center justify-center rounded-[2px] border border-[#9a9a9a] bg-gradient-to-r from-[#f4f4f4] to-[#d4d4d4]"><Ticks v /></div>
              <div className="mt-auto"><Arrow d="d" /></div>
            </div>
          </div>
          <div className="flex h-[17px] shrink-0 items-center bg-[#f0f0f0] pl-[5px] pr-[4px]">
            <Arrow d="l" />
            <div className="ml-[9px] flex h-[16px] w-[119px] items-center justify-center rounded-[2px] border border-[#9a9a9a] bg-gradient-to-b from-[#f4f4f4] to-[#d4d4d4]"><Ticks /></div>
            <div className="ml-auto mr-[20px]"><Arrow d="r" /></div>
          </div>
        </div>
        {/* canvas */}
        <div className="ml-[6px] h-[427px] min-w-0 flex-1 border-l border-t border-[#808080] bg-white">
          <Motor />
        </div>
      </div>
      <div className="h-[2px] shrink-0 bg-[#8c8c8c]" />
      {/* bottom */}
      <div className="flex min-h-0 flex-1 bg-[#f4f4f4] pl-[3px] pt-[1px]">
        <SideStrip label="nager" className="h-full w-[15px]" />
        <div className="ml-px flex w-[659px] shrink-0 flex-col border-l border-t border-[#707070] bg-white pl-[2px]">
          <div className="flex h-[18px] items-center pl-[1px] pt-[2px]">
            <div className="flex h-[16px] w-[17px] shrink-0 items-center justify-start pl-[1px]"><Box t="-" /></div>
            <svg width="16" height="16" viewBox="0 0 16 16" className="shrink-0">
              <g stroke="#109030" fill="#fff"><rect x="1" y="3" width="6" height="12" /><rect x="4" y="1" width="11" height="12" /></g>
              <path d="M6 4h4M6 6h4M6 8h4M6 10h4M11 4h3M11 7h3M11 10h3" stroke="#10b040" />
            </svg>
            <span className={`ml-[3px] bg-[#e2e2e2] pl-[2px] pr-[3px] ${mono} leading-[15px]`}>PMSM2 (F:/Documents/Ansoft/)</span>
          </div>
          <div className="flex h-[16px] items-center pl-[21px]">
            <div className="flex h-[16px] w-[19px] shrink-0 items-center justify-start pl-px"><Box t="-" /></div>
            <svg width="14" height="14" viewBox="0 0 14 14" className="shrink-0">
              <rect x=".5" y=".5" width="13" height="13" fill="#fff" stroke="#111" />
              <rect x="2" y="2" width="3" height="5" fill="#2030d0" /><rect x="2" y="9" width="3" height="3" fill="#20a020" />
              <rect x="8" y="3" width="3" height="9" fill="#e02020" /><path d="M6 3v8" stroke="#e8c820" />
            </svg>
            <span className={`ml-[5px] whitespace-pre ${mono} leading-[16px]`}>Maxwell2DDesign1 (Magnetostatic, XY)</span>
          </div>
          <div className="mt-[-1px] flex h-[16px] items-center pl-[74px]">
            <Err />
            <span className={`ml-[6px] whitespace-pre ${mono} leading-[16px]`}>Unable to create child process: g3dmesher, error code = 267 (9:39:56 <span className="font-['Noto_Sans_CJK_SC',sans-serif] text-[12px]">上午　三月</span> 09, 2017)</span>
          </div>
          <div className="flex items-start pl-[74px] pt-[1px]">
            <div className="mt-[4px]"><Err /></div>
            <span className={`ml-[6px] w-[552px] whitespace-pre-wrap ${mono} leading-[12px]`}>Simulation completed with execution error on server: Local Machine. (9:39:56 <span className="font-['Noto_Sans_CJK_SC',sans-serif] text-[12px]">上午　三月</span> 09, 2017)</span>
          </div>
        </div>
        <div className="ml-[7px] h-full w-px shrink-0 bg-[#808080]" />
        <SideStrip className="ml-[2px] h-full w-[15px]" />
        <div className="ml-[3px] min-w-0 flex-1 border-l border-t border-[#707070] bg-white" />
      </div>
      {/* watermark */}
      <div className="absolute left-[1108px] top-[648px] flex h-[24px] items-center text-[#8a8a8a]">
        <span className="w-[88px]">
          <span className="relative inline-block origin-left scale-x-[1.38] font-['DejaVu_Sans',sans-serif] text-[17px] font-bold leading-[24px] tracking-[2px]">
            simoL
            <span className="absolute left-[13px] top-[5px] h-[3px] w-[3px] rounded-full bg-[#f06070]" />
          </span>
        </span>
        <span className="font-['Noto_Sans_CJK_SC',sans-serif] text-[19px] leading-[24px] tracking-[2.500px]">西莫论坛</span>
      </div>
    </div>
  );
}
